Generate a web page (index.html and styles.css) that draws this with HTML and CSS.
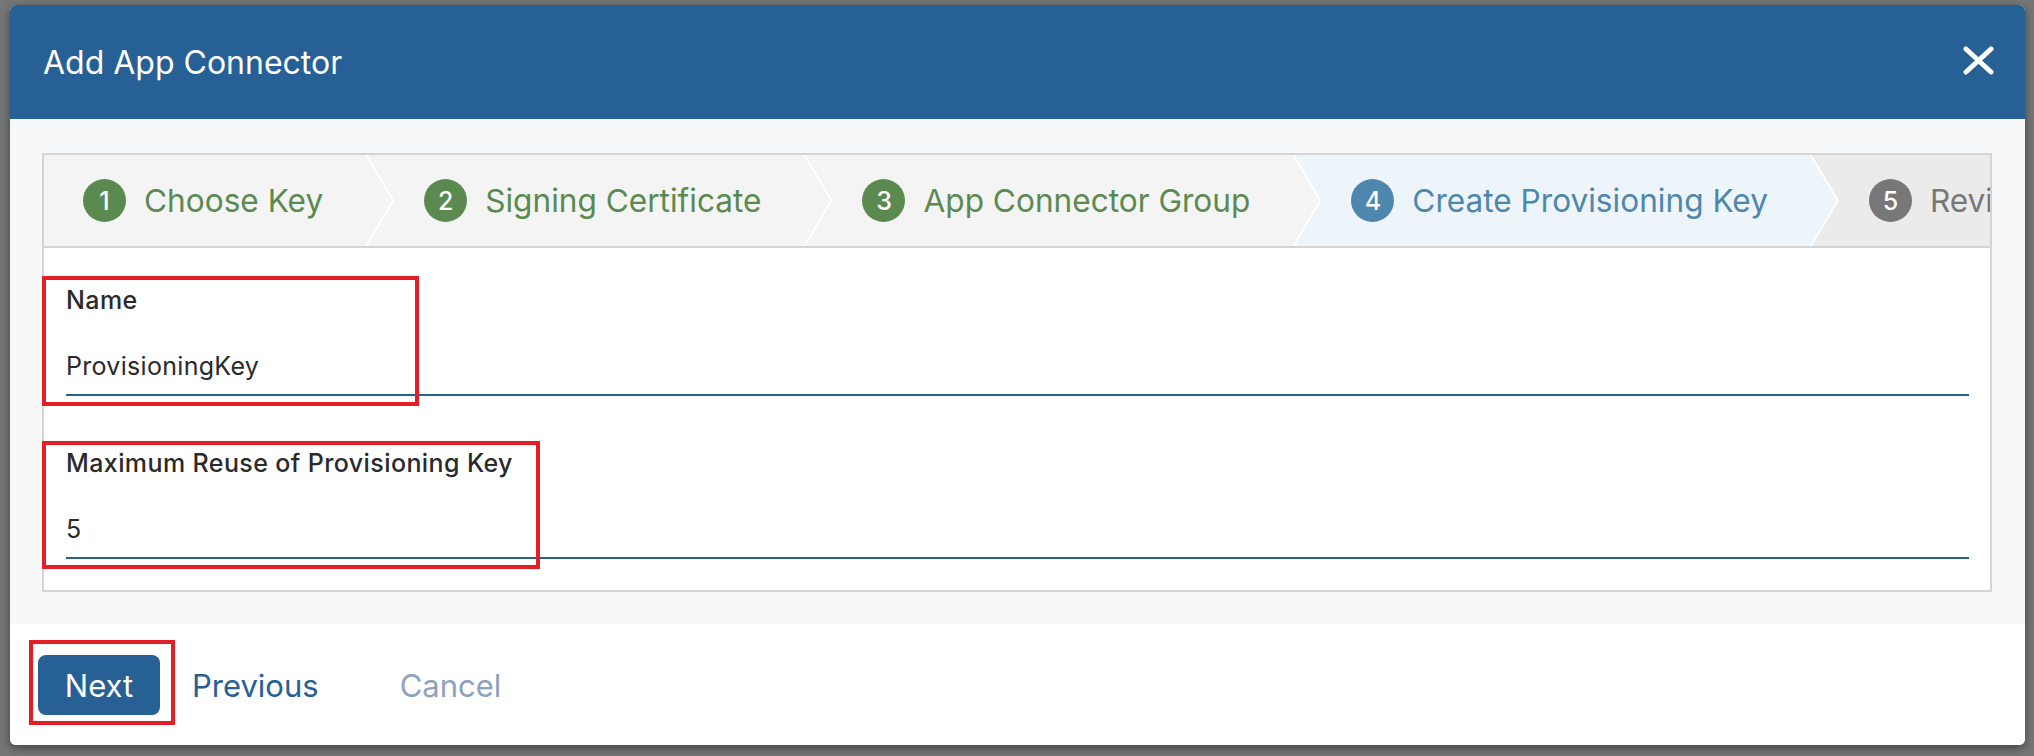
FILE: index.html
```html
<!DOCTYPE html>
<html lang="en">
<head>
  <meta charset="UTF-8">
  <title>Add App Connector</title>
  <link rel="stylesheet" href="styles.css">
</head>
<body>
  <div class="modal">
    <header class="modal-header">
      <h1 class="modal-title">Add App Connector</h1>
      <button class="close-btn" aria-label="Close">
        <svg width="31" height="29" viewBox="0 0 31 29">
          <path d="M3 3 L28 26 M28 3 L3 26" stroke="#fff" stroke-width="5" stroke-linecap="round" fill="none"/>
        </svg>
      </button>
    </header>

    <div class="modal-body">
      <div class="wizard">
        <ol class="steps">
          <li class="step done"><span class="step-num">1</span><span class="step-label">Choose Key</span></li>
          <li class="step done"><span class="step-num">2</span><span class="step-label">Signing Certificate</span></li>
          <li class="step done"><span class="step-num">3</span><span class="step-label">App Connector Group</span></li>
          <li class="step active"><span class="step-num">4</span><span class="step-label">Create Provisioning Key</span></li>
          <li class="step todo"><span class="step-num">5</span><span class="step-label">Review</span></li>
        </ol>

        <form class="wizard-form">
          <div class="field">
            <label class="field-label" for="keyName">Name</label>
            <input class="field-input" id="keyName" type="text" value="ProvisioningKey">
            <span class="callout callout-name"></span>
          </div>
          <div class="field">
            <label class="field-label" for="maxReuse">Maximum Reuse of Provisioning Key</label>
            <input class="field-input" id="maxReuse" type="text" value="5">
            <span class="callout callout-reuse"></span>
          </div>
        </form>
      </div>
    </div>

    <footer class="modal-footer">
      <div class="next-wrap">
        <button class="btn btn-primary">Next</button>
        <span class="callout callout-next"></span>
      </div>
      <button class="btn btn-link">Previous</button>
      <button class="btn btn-link btn-muted">Cancel</button>
    </footer>
  </div>
</body>
</html>
```

FILE: styles.css
```css
* {
  box-sizing: border-box;
}

html, body {
  height: 100%;
}

body {
  margin: 0;
  padding: 5px 9px 11px 10px;
  background-color: #767676;
  font-family: 'Inter', 'Noto Sans', sans-serif;
  color: #262626;
  overflow: hidden;
}

.modal {
  display: flex;
  flex-direction: column;
  height: 740px;
  background: #fff;
  border-radius: 6px;
  overflow: hidden;
  box-shadow: 0 3px 10px rgba(0, 0, 0, 0.45);
}

/* header */
.modal-header {
  height: 114px;
  flex: none;
  display: flex;
  align-items: center;
  justify-content: space-between;
  padding: 0 31px 0 33px;
  background-color: #266094;
}

.modal-title {
  margin: 0;
  font-size: 32px;
  font-weight: 400;
  color: #fff;
}

.close-btn {
  display: flex;
  padding: 0;
  margin-top: -3px;
  border: none;
  background: none;
  cursor: pointer;
}

/* body */
.modal-body {
  height: 505px;
  flex: none;
  padding: 34px 33px 32px 32px;
  background-color: #f7f8fa;
}

.wizard {
  height: 100%;
  background: #fff;
  border: 2px solid #d4d4d4;
  display: flex;
  flex-direction: column;
}

.steps {
  display: flex;
  margin: 0;
  padding: 0;
  list-style: none;
  height: 93px;
  flex: none;
  overflow: hidden;
  background: #fff;
  border-bottom: 2px solid #d4d4d4;
}

.step {
  flex: none;
  display: flex;
  align-items: center;
  gap: 18px;
  padding: 0 69px 0 57px;
  margin-left: -25px;
  background: #f4f4f4;
  clip-path: polygon(0 0, calc(100% - 27px) 0, 100% 50%, calc(100% - 27px) 100%, 0 100%, 27px 50%);
}

.step:first-child {
  margin-left: 0;
  padding-left: 39px;
  clip-path: polygon(0 0, calc(100% - 27px) 0, 100% 50%, calc(100% - 27px) 100%, 0 100%);
}

.step-num {
  width: 43px;
  height: 43px;
  border-radius: 50%;
  display: flex;
  align-items: center;
  justify-content: center;
  font-size: 25px;
  font-weight: 500;
  color: #fff;
}

.step-label {
  font-size: 31.6px;
  white-space: nowrap;
}

.step.done .step-num {
  background: #5a8a50;
}

.step.done .step-label {
  color: #5a8a50;
}

.step.active {
  background: #eef5fa;
}

.step.active .step-num {
  background: #4e87ad;
}

.step.active .step-label {
  color: #4e87ad;
}

.step.todo {
  background: #ebebeb;
}

.step.todo .step-num {
  background: #777;
}

.step.todo .step-label {
  color: #777;
}

/* form */
.wizard-form {
  padding: 38px 21px 0 22px;
}

.field {
  position: relative;
}

.field + .field {
  margin-top: 53px;
}

.field-label {
  display: block;
  font-size: 25px;
  line-height: 29px;
  font-weight: 500;
  letter-spacing: 0.4px;
  color: #2a2a2a;
}

.field-input {
  display: block;
  width: 100%;
  height: 81px;
  padding: 36px 0 14px;
  border: none;
  border-bottom: 2px solid #266094;
  background: transparent;
  font-family: inherit;
  font-size: 25px;
  line-height: 29px;
  letter-spacing: 0.3px;
  color: #2a2a2a;
  outline: none;
}

/* red annotation boxes */
.callout {
  position: absolute;
  border: 4px solid #e41e26;
  pointer-events: none;
}

.callout-name {
  left: -24px;
  top: -10px;
  width: 377px;
  height: 130px;
}

.callout-reuse {
  left: -24px;
  top: -8px;
  width: 498px;
  height: 128px;
}

.callout-next {
  left: -9px;
  top: -15px;
  width: 146px;
  height: 85px;
}

/* footer */
.modal-footer {
  flex: 1;
  display: flex;
  align-items: center;
  padding: 1px 28px 0;
  background: #fff;
}

.next-wrap {
  position: relative;
  margin-right: 32px;
}

.btn {
  font-family: inherit;
  font-size: 31px;
  border: none;
  background: none;
  cursor: pointer;
  padding: 0;
}

.btn-primary {
  display: block;
  width: 122px;
  height: 60px;
  border-radius: 8px;
  background: #266094;
  color: #fff;
}

.btn-link {
  color: #266094;
}

.btn-muted {
  margin-left: 81px;
  color: #8fa2bb;
}
```
